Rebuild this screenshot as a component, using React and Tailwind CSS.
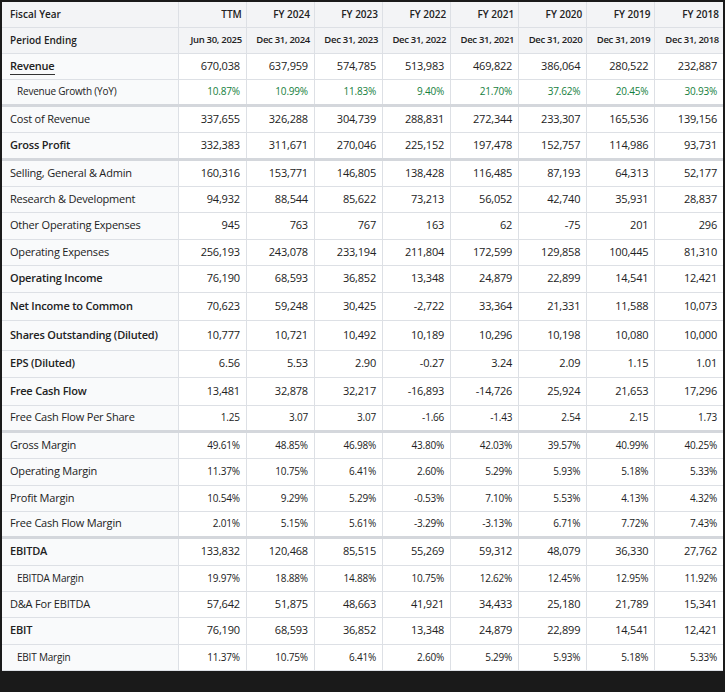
const cols = ['TTM', 'FY 2024', 'FY 2023', 'FY 2022', 'FY 2021', 'FY 2020', 'FY 2019', 'FY 2018']
const periods = ['Jun 30, 2025', 'Dec 31, 2024', 'Dec 31, 2023', 'Dec 31, 2022', 'Dec 31, 2021', 'Dec 31, 2020', 'Dec 31, 2019', 'Dec 31, 2018']

// kind: b = bold, s = small indented, g = small green; thick = heavier bottom border
const rows = [
  { label: 'Revenue', kind: 'b', link: true, h: 26, v: ['670,038', '637,959', '574,785', '513,983', '469,822', '386,064', '280,522', '232,887'] },
  { label: 'Revenue Growth (YoY)', kind: 'g', h: 26, thick: true, v: ['10.87%', '10.99%', '11.83%', '9.40%', '21.70%', '37.62%', '20.45%', '30.93%'] },
  { label: 'Cost of Revenue', h: 27, v: ['337,655', '326,288', '304,739', '288,831', '272,344', '233,307', '165,536', '139,156'] },
  { label: 'Gross Profit', kind: 'b', h: 27, thick: true, v: ['332,383', '311,671', '270,046', '225,152', '197,478', '152,757', '114,986', '93,731'] },
  { label: 'Selling, General & Admin', h: 27, v: ['160,316', '153,771', '146,805', '138,428', '116,485', '87,193', '64,313', '52,177'] },
  { label: 'Research & Development', h: 26, v: ['94,932', '88,544', '85,622', '73,213', '56,052', '42,740', '35,931', '28,837'] },
  { label: 'Other Operating Expenses', h: 27, v: ['945', '763', '767', '163', '62', '-75', '201', '296'] },
  { label: 'Operating Expenses', h: 26, v: ['256,193', '243,078', '233,194', '211,804', '172,599', '129,858', '100,445', '81,310'] },
  { label: 'Operating Income', kind: 'b', h: 27, v: ['76,190', '68,593', '36,852', '13,348', '24,879', '22,899', '14,541', '12,421'] },
  { label: 'Net Income to Common', kind: 'b', h: 28, v: ['70,623', '59,248', '30,425', '-2,722', '33,364', '21,331', '11,588', '10,073'] },
  { label: 'Shares Outstanding (Diluted)', kind: 'b', h: 30, v: ['10,777', '10,721', '10,492', '10,189', '10,296', '10,198', '10,080', '10,000'] },
  { label: 'EPS (Diluted)', kind: 'b', h: 27, v: ['6.56', '5.53', '2.90', '-0.27', '3.24', '2.09', '1.15', '1.01'] },
  { label: 'Free Cash Flow', kind: 'b', h: 28, v: ['13,481', '32,878', '32,217', '-16,893', '-14,726', '25,924', '21,653', '17,296'] },
  { label: 'Free Cash Flow Per Share', kind: 'x', h: 26, thick: true, v: ['1.25', '3.07', '3.07', '-1.66', '-1.43', '2.54', '2.15', '1.73'] },
  { label: 'Gross Margin', kind: 'x', h: 27, v: ['49.61%', '48.85%', '46.98%', '43.80%', '42.03%', '39.57%', '40.99%', '40.25%'] },
  { label: 'Operating Margin', kind: 'x', h: 27, v: ['11.37%', '10.75%', '6.41%', '2.60%', '5.29%', '5.93%', '5.18%', '5.33%'] },
  { label: 'Profit Margin', kind: 'x', h: 26, v: ['10.54%', '9.29%', '5.29%', '-0.53%', '7.10%', '5.53%', '4.13%', '4.32%'] },
  { label: 'Free Cash Flow Margin', kind: 'x', h: 26, thick: true, v: ['2.01%', '5.15%', '5.61%', '-3.29%', '-3.13%', '6.71%', '7.72%', '7.43%'] },
  { label: 'EBITDA', kind: 'b', h: 28, v: ['133,832', '120,468', '85,515', '55,269', '59,312', '48,079', '36,330', '27,762'] },
  { label: 'EBITDA Margin', kind: 's', h: 26, v: ['19.97%', '18.88%', '14.88%', '10.75%', '12.62%', '12.45%', '12.95%', '11.92%'] },
  { label: 'D&A For EBITDA', h: 26, v: ['57,642', '51,875', '48,663', '41,921', '34,433', '25,180', '21,789', '15,341'] },
  { label: 'EBIT', kind: 'b', h: 27, v: ['76,190', '68,593', '36,852', '13,348', '24,879', '22,899', '14,541', '12,421'] },
  { label: 'EBIT Margin', kind: 's', h: 26, v: ['11.37%', '10.75%', '6.41%', '2.60%', '5.29%', '5.93%', '5.18%', '5.33%'] },
]

function HeaderRow({ label, values, h, tight }) {
  return (
    <tr className="border-b border-[#dde0e5]" style={{ height: h }}>
      <td className="bg-[#f3f4f6] px-2 text-[10px] font-semibold border-r border-[#dde0e5]">{label}</td>
      {values.map((c) => (
        <td key={c} className={`bg-[#f3f4f6] pl-0 pr-1 text-right font-semibold border-r border-[#dde0e5] last:border-r-0 whitespace-nowrap overflow-hidden ${tight ? 'text-[9.5px] tracking-[-0.3px]' : 'text-[10px]'}`}>{c}</td>
      ))}
    </tr>
  )
}

export default function App() {
  return (
    <div className="w-[725px] h-[692px] overflow-hidden bg-[#1a1a1a] p-[2px]" style={{ fontFamily: '"Open Sans", "Noto Sans", sans-serif' }}>
      <table className="w-[721px] table-fixed border-collapse bg-white text-[#222]">
        <colgroup>
          <col className="w-[176px]" />
          {cols.map((c) => <col key={c} className="w-[68px]" />)}
        </colgroup>
        <tbody>
          <HeaderRow label="Fiscal Year" values={cols} h={25} />
          <HeaderRow label="Period Ending" values={periods} h={26} tight />
          {rows.map((r) => {
            const small = r.kind === 's' || r.kind === 'g'
            const bold = r.kind === 'b'
            return (
              <tr key={r.label} className={r.thick ? 'border-b-[3px] border-[#d4d7dc]' : 'border-b border-[#dde0e5]'} style={{ height: r.h }}>
                <td className={`bg-[#f9fafb] border-r border-[#dde0e5] whitespace-nowrap overflow-hidden tracking-[-0.2px] ${small ? 'pl-[15px] text-[10px]' : 'pl-2 text-[11px]'} ${bold ? 'font-semibold' : ''}`}>
                  {r.link ? <span className="border-b border-[#333] pb-[1px]">{r.label}</span> : r.label}
                </td>
                {r.v.map((v, i) => (
                  <td key={i} className={`pl-0 pr-1.5 text-right border-r border-[#dde0e5] last:border-r-0 overflow-hidden tracking-[-0.2px] ${r.kind === 'g' ? 'text-[10px] text-[#15803d]' : small || r.kind === 'x' ? 'text-[10px]' : 'text-[11px]'} ${bold ? 'font-medium' : ''}`}>
                    {v}
                  </td>
                ))}
              </tr>
            )
          })}
        </tbody>
      </table>
    </div>
  )
}
